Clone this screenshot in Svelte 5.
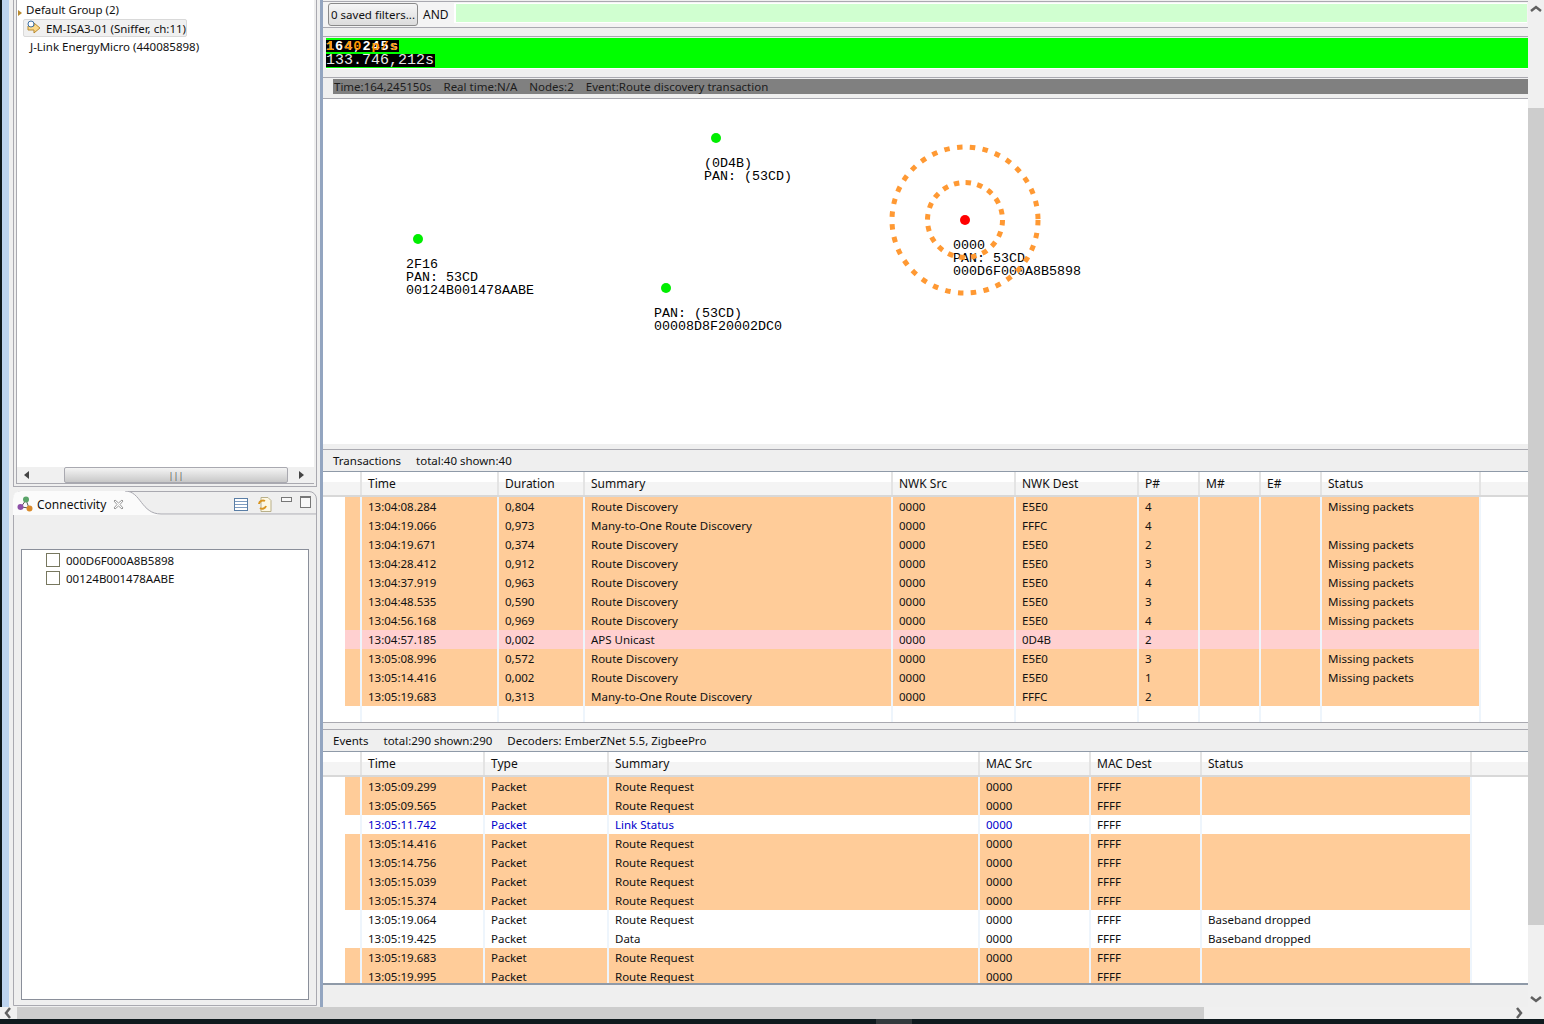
<script lang="ts">
  const txRows = [
    ["13:04:08.284", "0,804", "Route Discovery", "0000", "E5E0", "4", "Missing packets"],
    ["13:04:19.066", "0,973", "Many-to-One Route Discovery", "0000", "FFFC", "4", ""],
    ["13:04:19.671", "0,374", "Route Discovery", "0000", "E5E0", "2", "Missing packets"],
    ["13:04:28.412", "0,912", "Route Discovery", "0000", "E5E0", "3", "Missing packets"],
    ["13:04:37.919", "0,963", "Route Discovery", "0000", "E5E0", "4", "Missing packets"],
    ["13:04:48.535", "0,590", "Route Discovery", "0000", "E5E0", "3", "Missing packets"],
    ["13:04:56.168", "0,969", "Route Discovery", "0000", "E5E0", "4", "Missing packets"],
    ["13:04:57.185", "0,002", "APS Unicast", "0000", "0D4B", "2", ""],
    ["13:05:08.996", "0,572", "Route Discovery", "0000", "E5E0", "3", "Missing packets"],
    ["13:05:14.416", "0,002", "Route Discovery", "0000", "E5E0", "1", "Missing packets"],
    ["13:05:19.683", "0,313", "Many-to-One Route Discovery", "0000", "FFFC", "2", ""],
  ];

  const evRows = [
    { cells: ["13:05:09.299", "Packet", "Route Request", "0000", "FFFF", ""], kind: "hit" },
    { cells: ["13:05:09.565", "Packet", "Route Request", "0000", "FFFF", ""], kind: "hit" },
    { cells: ["13:05:11.742", "Packet", "Link Status", "0000", "FFFF", ""], kind: "link" },
    { cells: ["13:05:14.416", "Packet", "Route Request", "0000", "FFFF", ""], kind: "hit" },
    { cells: ["13:05:14.756", "Packet", "Route Request", "0000", "FFFF", ""], kind: "hit" },
    { cells: ["13:05:15.039", "Packet", "Route Request", "0000", "FFFF", ""], kind: "hit" },
    { cells: ["13:05:15.374", "Packet", "Route Request", "0000", "FFFF", ""], kind: "hit" },
    { cells: ["13:05:19.064", "Packet", "Route Request", "0000", "FFFF", "Baseband dropped"], kind: "" },
    { cells: ["13:05:19.425", "Packet", "Data", "0000", "FFFF", "Baseband dropped"], kind: "" },
    { cells: ["13:05:19.683", "Packet", "Route Request", "0000", "FFFF", ""], kind: "hit" },
    { cells: ["13:05:19.995", "Packet", "Route Request", "0000", "FFFF", ""], kind: "hit" },
  ];

  const txHead = ["Time", "Duration", "Summary", "NWK Src", "NWK Dest", "P#", "M#", "E#", "Status"];
  const evHead = ["Time", "Type", "Summary", "MAC Src", "MAC Dest", "Status"];

  // P# is followed by two empty columns
  const txCells = (r: string[]) => [r[0], r[1], r[2], r[3], r[4], r[5], "", "", r[6]];

  const nodes = [
    { x: 716, y: 139, lx: 704, ly: 158, color: "#00ee00", lines: ["(0D4B)", "PAN: (53CD)"] },
    { x: 418, y: 240, lx: 406, ly: 259, color: "#00ee00", lines: ["2F16", "PAN: 53CD", "00124B001478AABE"] },
    { x: 666, y: 289, lx: 654, ly: 308, color: "#00ee00", lines: ["PAN: (53CD)", "00008D8F20002DC0"] },
    { x: 965, y: 221, lx: 953, ly: 240, color: "#ff0000", lines: ["0000", "PAN: 53CD", "000D6F000A8B5898"] },
  ];
</script>

<div class="screen">
  <div class="main">
    <aside class="left">
      <div class="tree-view">
        <div class="tree">
          <div class="group"><span class="twist"></span>Default Group (2)</div>
          <div class="device selected">
            <svg width="16" height="16" viewBox="0 0 16 16">
              <path d="M2 6h6V3l6 5-6 5v-3H2z" fill="#fbd98a" stroke="#b98a2e" />
              <circle cx="5" cy="4" r="3" fill="#fff" stroke="#3a6ea5" />
            </svg>
            EM-ISA3-01 (Sniffer, ch:11)
          </div>
          <div class="device">
            <svg width="16" height="16" viewBox="0 0 16 16">
              <circle cx="8" cy="8" r="6" fill="#8c8c8c" />
              <circle cx="8" cy="8" r="3" fill="#555" />
            </svg>
            J-Link EnergyMicro (440085898)
          </div>
        </div>
        <div class="hbar">
          <svg class="arr" width="14" height="14" viewBox="0 0 14 14"><path d="M9 3v8L4 7z" fill="#444" /></svg>
          <div class="hthumb"><span>|||</span></div>
          <svg class="arr" width="14" height="14" viewBox="0 0 14 14"><path d="M5 3v8l5-4z" fill="#444" /></svg>
        </div>
      </div>

      <div class="conn-view">
        <div class="conn-head">
          <svg class="tab-shape" width="303" height="25" viewBox="0 0 303 25">
            <path d="M0 24V8Q0 0 8 0H112C128 0 128 23 148 23H303V24H0Z" fill="#fbfbfb" />
            <path d="M112 0C128 0 128 23 148 23H303" fill="none" stroke="#a9a9b0" />
          </svg>
          <svg class="conn-icon" width="16" height="16" viewBox="0 0 16 16">
            <path d="M9 4L4 11M9 4l3 8M4 11l8 1" stroke="#555" fill="none" />
            <circle cx="9" cy="3.500" r="3" fill="#5aa469" />
            <circle cx="3.500" cy="11" r="3" fill="#8d4fa8" />
            <circle cx="12.500" cy="12.500" r="3" fill="#d98a2b" />
          </svg>
          <span class="conn-title">Connectivity</span>
          <svg class="conn-close" width="11" height="11" viewBox="0 0 11 11">
            <path d="M1 2l1-1 3.500 3L9 1l1 1-3 3.500 3 3.500-1 1-3.500-3L2 10 1 9l3-3.500z" fill="#fff" stroke="#999" />
          </svg>
          <span class="spacer"></span>
          <svg class="tool" width="14" height="13" viewBox="0 0 14 13">
            <rect x=".5" y=".5" width="13" height="12" fill="#fff" stroke="#5a7ea6" />
            <path d="M1 3.500h12M1 6.500h12M1 9.500h12" stroke="#7e9cc0" />
          </svg>
          <svg class="tool" width="15" height="15" viewBox="0 0 15 15">
            <path d="M4 .5h7l3 3v11H4z" fill="#fdf8e4" stroke="#b9b08a" />
            <path d="M2 7a4 4 0 0 1 6-3M9 9a4 4 0 0 1-6 2" fill="none" stroke="#d9951f" stroke-width="2" />
          </svg>
          <div class="min-btn"></div>
          <div class="max-btn"></div>
        </div>
        <div class="conn-list">
          <div class="conn-row"><span class="check"></span>000D6F000A8B5898</div>
          <div class="conn-row"><span class="check"></span>00124B001478AABE</div>
        </div>
      </div>
    </aside>

    <section class="right">
      <div class="filters">
        <button class="saved">0 saved filters...</button>
        <span class="and">AND</span>
        <div class="filter-input"></div>
      </div>
      <div class="sash"></div>

      <div class="graph">
        <div class="green">
          <div class="rate"><span>164,245s</span><span class="rate-over">1 40 p/s</span></div>
          <div class="duration">133.746,212s</div>
        </div>
      </div>

      <div class="status">
        <div class="status-bar">
          <span>Time:164,245150s</span>
          <span>Real time:N/A</span>
          <span>Nodes:2</span>
          <span>Event:Route discovery transaction</span>
        </div>
      </div>

      <div class="canvas">
        {#each nodes as n}
          <div class="node-label" style="left:{n.lx - 323}px;top:{n.ly - 100}px">
            {#each n.lines as line}
              <div>{line}</div>
            {/each}
          </div>
        {/each}
        <svg class="rings" width="1204" height="345" viewBox="323 100 1204 345">
          <circle cx="965" cy="221" r="73" fill="none" stroke="#ff9933" stroke-width="5" stroke-dasharray="5.500 7.400" />
          <circle cx="965" cy="221" r="37.500" fill="none" stroke="#ff9933" stroke-width="5" stroke-dasharray="5.500 6.300" />
          {#each nodes as n}
            <circle cx={n.x} cy={n.y} r="5" fill={n.color} />
          {/each}
        </svg>
      </div>

      <div class="sash-low"></div>
      <div class="panel-bar">
        <span>Transactions</span>
        <span>total:40 shown:40</span>
      </div>
      <div class="tx-table">
        <div class="row tx head">
          <div class="cell"></div>
          <div class="cell"></div>
          {#each txHead as h}
            <div class="cell">{h}</div>
          {/each}
          <div class="cell"></div>
        </div>
        {#each txRows as r}
          <div class="row tx" class:hit={r[2] !== "APS Unicast"} class:pink={r[2] === "APS Unicast"}>
            <div class="cell blank"></div>
            <div class="cell mark"></div>
            {#each txCells(r) as c}
              <div class="cell mark">{c}</div>
            {/each}
            <div class="cell blank"></div>
          </div>
        {/each}
        <div class="row tx filler">
          <div class="cell blank"></div>
          <div class="cell"></div>
          {#each txHead as h}
            <div class="cell"></div>
          {/each}
          <div class="cell blank"></div>
        </div>
      </div>

      <div class="sash-mid"></div>
      <div class="panel-bar">
        <span>Events</span>
        <span>total:290 shown:290</span>
        <span>Decoders: EmberZNet 5.5, ZigbeePro</span>
      </div>
      <div class="ev-table">
        <div class="row ev head">
          <div class="cell"></div>
          <div class="cell"></div>
          {#each evHead as h}
            <div class="cell">{h}</div>
          {/each}
          <div class="cell"></div>
        </div>
        {#each evRows as r}
          <div class="row ev" class:hit={r.kind === "hit"}>
            <div class="cell blank"></div>
            <div class="cell mark"></div>
            {#each r.cells as c, i}
              <div class="cell mark" class:link={r.kind === "link" && i < 4}>{c}</div>
            {/each}
            <div class="cell blank"></div>
          </div>
        {/each}
        <div class="row ev filler">
          <div class="cell blank"></div>
          <div class="cell"></div>
          {#each evHead as h}
            <div class="cell"></div>
          {/each}
          <div class="cell blank"></div>
        </div>
      </div>
    </section>

    <div class="vscroll">
      <div class="vtrack top">
        <svg width="12" height="8" viewBox="0 0 12 8"><path d="M1 6l5-4 5 4" fill="none" stroke="#606060" stroke-width="2.500" /></svg>
      </div>
      <div class="vthumb"></div>
      <div class="vtrack bottom">
        <svg width="12" height="8" viewBox="0 0 12 8"><path d="M1 2l5 4 5-4" fill="none" stroke="#606060" stroke-width="2.500" /></svg>
      </div>
    </div>
  </div>

  <div class="pagebar">
    <div class="ptrack start">
      <svg width="8" height="12" viewBox="0 0 8 12"><path d="M6 1L2 6l4 5" fill="none" stroke="#606060" stroke-width="2.500" /></svg>
    </div>
    <div class="pthumb"></div>
    <div class="ptrack end">
      <svg width="8" height="12" viewBox="0 0 8 12"><path d="M2 1l4 5-4 5" fill="none" stroke="#606060" stroke-width="2.500" /></svg>
    </div>
  </div>
  <div class="taskbar"><span></span></div>
</div>

<style>
  :global(body) {
    margin: 0;
    background: #efefef;
  }

  .screen {
    width: 1544px;
    height: 1024px;
    display: flex;
    flex-direction: column;
    overflow: hidden;
    font-family: "Noto Sans", "Open Sans", sans-serif;
    font-size: 11.5px;
    color: #111;
  }

  .main {
    display: flex;
    height: 1007px;
    flex: none;
  }

  /* left column */
  .left {
    width: 320px;
    flex: none;
    box-sizing: border-box;
    display: flex;
    flex-direction: column;
    gap: 4px;
    padding: 0 3px 1px 4px;
    border-left: 9px solid #bdd3ee;
    background: #efefef;
    box-shadow: inset 0 0 0 0 #000;
    position: relative;
  }

  .left::before {
    content: "";
    position: absolute;
    left: -9px;
    top: 0;
    bottom: 0;
    width: 2px;
    background: #10181c;
  }

  .tree-view {
    height: 487px;
    flex: none;
    box-sizing: border-box;
    display: flex;
    flex-direction: column;
    border: 1px solid #a9a9b0;
    border-top: 0;
    padding: 0 2px 2px;
  }

  .tree {
    flex: 1;
    background: #fff;
    border-left: 1px solid #a9a9b0;
    padding-top: 1px;
  }

  .group {
    height: 18px;
    line-height: 18px;
    padding-left: 9px;
    position: relative;
  }

  .twist {
    position: absolute;
    left: 1px;
    top: 9px;
    border-left: 4px solid #b98a2e;
    border-top: 3px solid transparent;
    border-bottom: 3px solid transparent;
  }

  .device {
    height: 18px;
    display: flex;
    align-items: center;
    gap: 4px;
    margin-left: 6px;
    padding-left: 2px;
    width: 164px;
    white-space: nowrap;
    box-sizing: border-box;
    border: 1px solid transparent;
    border-radius: 2px;
  }

  .device.selected {
    background: #f0f0f0;
    border-color: #d9d9d9;
  }

  .hbar {
    height: 16px;
    flex: none;
    display: flex;
    align-items: center;
    background: #f0f0f0;
    border-left: 1px solid #a9a9b0;
    border-bottom: 1px solid #a9a9b0;
    padding: 0 6px 0 3px;
  }

  .arr {
    flex: none;
  }

  .hbar .hthumb {
    height: 14px;
    width: 230px;
    margin: 0 6px 0 30px;
    border: 1px solid #a9a9b0;
    border-radius: 2px;
    background: linear-gradient(#f4f4f4, #c8c8c8);
    display: flex;
    align-items: center;
    justify-content: center;
    font-size: 9px;
    color: #555;
  }

  .conn-view {
    flex: 1;
    min-height: 0;
    display: flex;
    flex-direction: column;
    border: 1px solid #a9a9b0;
    border-radius: 8px 8px 0 0;
    background: #efefef;
  }

  .conn-head {
    height: 24px;
    flex: none;
    display: flex;
    align-items: center;
    position: relative;
    padding: 0 4px 0 3px;
  }

  .tab-shape {
    position: absolute;
    left: -1px;
    top: -1px;
  }

  .conn-icon,
  .conn-title,
  .conn-close,
  .tool {
    position: relative;
  }

  .conn-title {
    margin-left: 4px;
    font-size: 12px;
  }

  .conn-close {
    margin-left: 7px;
  }

  .spacer {
    flex: 1;
  }

  .tool {
    margin-right: 9px;
  }

  .min-btn {
    width: 9px;
    height: 3px;
    border: 1px solid #777;
    margin: -10px 8px 0 0;
    background: #f8f8f8;
    position: relative;
  }

  .max-btn {
    width: 9px;
    height: 9px;
    border: 1px solid #777;
    border-top-width: 2px;
    margin: -5px 1px 0 0;
    background: #f8f8f8;
    position: relative;
  }

  .conn-list {
    flex: 1;
    margin: 33px 7px 5px;
    border: 1px solid #8a8f9a;
    background: #fff;
    padding: 1px 0 0 24px;
  }

  .conn-row {
    height: 18px;
    display: flex;
    align-items: center;
    gap: 6px;
  }

  .check {
    width: 12px;
    height: 12px;
    border: 1px solid #77775f;
    background: #fff;
  }

  /* right column */
  .right {
    width: 1208px;
    flex: none;
    box-sizing: border-box;
    display: flex;
    flex-direction: column;
    border-left: 3px solid #93a5c0;
    background: #efefef;
  }

  .filters {
    margin-top: 1px;
    height: 27px;
    box-sizing: border-box;
    display: flex;
    align-items: flex-start;
    padding: 1px 1px 0 5px;
    border-top: 1px solid #a9a9b0;
    border-bottom: 1px solid #a9a9b0;
    background: #f4f4f4;
  }

  .saved {
    width: 90px;
    height: 23px;
    padding: 0;
    font: inherit;
    color: #111;
    border: 1px solid #8a8a8a;
    border-radius: 3px;
    background: linear-gradient(#f6f6f6, #dcdcdc);
  }

  .and {
    margin: 3px 5px 0;
    font-size: 12px;
  }

  .filter-input {
    flex: 1;
    height: 18px;
    margin-top: 0;
    border: 2px solid #fff;
    border-width: 1px 0 1px 2px;
    background: #d0ffd0;
  }

  .sash {
    height: 8px;
    border-bottom: 1px solid #a9a9b0;
  }

  .graph {
    height: 41px;
    box-sizing: border-box;
    padding: 1px 0 0 3px;
    border-bottom: 1px solid #a9a9b0;
  }

  .green {
    height: 30px;
    background: #00ff00;
    box-sizing: border-box;
    padding-top: 2px;
    border-bottom: 1px solid #fff;
    box-sizing: content-box;
    padding-bottom: 0;
    height: 28px;
    font-family: "Liberation Mono", monospace;
    font-size: 15px;
    line-height: 13px;
    color: #fff;
  }

  .rate {
    position: relative;
    width: 73px;
    height: 12px;
    background: #000;
    font-weight: 700;
    font-size: 13.500px;
    white-space: pre;
    overflow: hidden;
  }

  .rate span {
    letter-spacing: 1px;
  }

  .rate-over {
    position: absolute;
    left: 0;
    top: 0;
    color: #ff9900;
  }

  .duration {
    margin-top: 2px;
    width: 109px;
    height: 13px;
    background: #000;
    color: #e8e8e8;
    white-space: pre;
  }

  .status {
    height: 21px;
    box-sizing: border-box;
    padding: 1px 0 0 10px;
    border-bottom: 1px solid #a9a9b0;
  }

  .status-bar {
    height: 15px;
    background: #808080;
    color: #1c1c1c;
    display: flex;
    gap: 12px;
    align-items: center;
    padding-left: 1px;
    white-space: nowrap;
  }

  .canvas {
    height: 345px;
    flex: none;
    position: relative;
    background: #fff;
  }

  .node-label {
    position: absolute;
    font-family: "Liberation Mono", monospace;
    font-size: 13.330px;
    line-height: 13px;
    color: #000;
    white-space: pre;
  }

  .rings {
    position: absolute;
    left: 0;
    top: 0;
  }

  .sash-low {
    height: 5px;
    flex: none;
    border-bottom: 1px solid #a9a9b0;
  }

  .sash-mid {
    height: 6px;
    flex: none;
    border-top: 1px solid #a9a9b0;
    border-bottom: 1px solid #a9a9b0;
  }

  .panel-bar {
    height: 21px;
    flex: none;
    display: flex;
    align-items: center;
    gap: 15px;
    padding-left: 10px;
    border-bottom: 1px solid #8f9aa8;
    white-space: nowrap;
  }

  .tx-table,
  .ev-table {
    background: #fff;
    flex: none;
    overflow: hidden;
  }

  .tx-table {
    height: 250px;
  }

  .ev-table {
    height: 231px;
    border-bottom: 2px solid #8f9aa8;
  }

  .row {
    display: grid;
    height: 19px;
    line-height: 19px;
  }

  .row.tx {
    grid-template-columns: 22px 17px 137px 86px 308px 123px 123px 61px 61px 61px 159px 1fr;
  }

  .row.ev {
    grid-template-columns: 22px 17px 123px 124px 371px 111px 111px 270px 1fr;
  }

  .cell {
    box-sizing: border-box;
    padding-left: 6px;
    border-right: 2px solid #eef5fc;
    background-clip: padding-box;
    white-space: nowrap;
    overflow: hidden;
  }

  .cell.blank {
    border-right: 0;
  }

  .row .cell:nth-child(2) {
    padding-left: 0;
  }

  .row.head {
    height: 25px;
    line-height: 23px;
    font-size: 12px;
    background: linear-gradient(#fff 10px, #f4f4f4 10px);
    border-bottom: 2px solid #d8d8d8;
    box-sizing: border-box;
  }

  .row.head .cell {
    border-right-color: #e4e4e4;
  }

  .row.head .cell:first-child {
    border-right: 0;
  }

  .row.head .cell:last-child {
    border-right: 0;
  }

  .row.filler {
    height: 16px;
  }

  .row.hit .mark {
    background-color: #ffcc99;
  }

  .row.pink .mark {
    background-color: #ffd0d0;
  }

  .link {
    color: #0000cc;
  }

  .vscroll {
    width: 16px;
    flex: none;
    display: flex;
    flex-direction: column;
    background: #f0f0f0;
  }

  .vtrack {
    display: flex;
    justify-content: center;
    flex: none;
  }

  .vtrack.top {
    height: 108px;
    padding-top: 5px;
    box-sizing: border-box;
  }

  .vtrack.bottom {
    height: 82px;
    align-items: flex-end;
    padding-bottom: 4px;
    box-sizing: border-box;
  }

  .vthumb {
    flex: 1;
    background: #cdcdcd;
  }

  .pagebar {
    height: 12px;
    flex: none;
    display: flex;
    background: #f0f0f0;
  }

  .ptrack {
    display: flex;
    align-items: center;
    flex: none;
    box-sizing: border-box;
  }

  .ptrack.start {
    width: 17px;
    padding-left: 4px;
  }

  .ptrack.end {
    flex: 1;
    justify-content: flex-end;
    padding-right: 21px;
  }

  .pthumb {
    width: 1187px;
    background: #cdcdcd;
  }

  .taskbar {
    height: 5px;
    flex: none;
    background: #0f1a1e;
    padding-left: 876px;
  }

  .taskbar span {
    display: block;
    width: 36px;
    height: 5px;
    background: #333a3d;
  }
</style>
